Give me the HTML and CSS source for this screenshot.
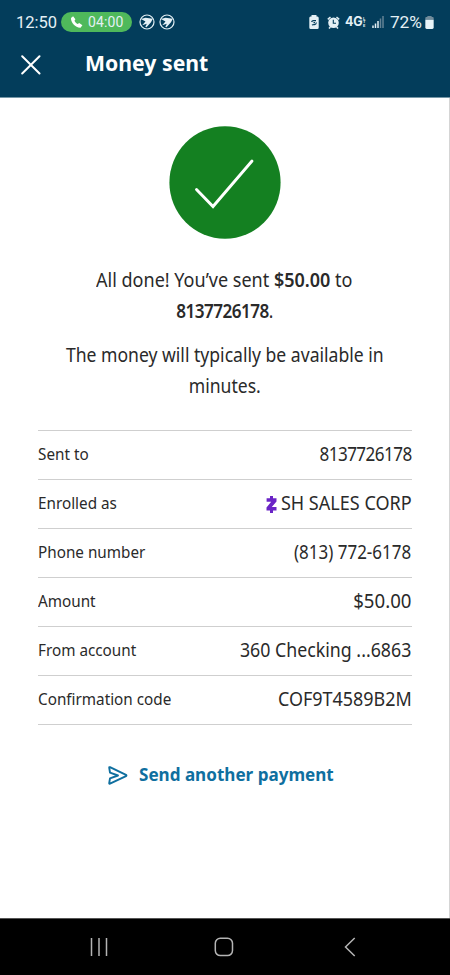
FILE: index.html
```html
<!DOCTYPE html>
<html lang="en">
<head>
<meta charset="utf-8">
<title>Money sent</title>
<link rel="stylesheet" href="styles.css">
</head>
<body>
<header class="header">
  <div class="status">
    <span class="clock">12:50</span>
    <span class="call">
      <svg width="13" height="12" viewBox="0 0 12 12"><path d="M2.600.200.500 2C.1 6.500 5.200 12 10 11.700L11.900 9.300 8.700 6.900 7.200 8.100C5.900 7.500 4.600 6.200 4 4.700L4.900 3.200Z" fill="#fff"/></svg>
      <span class="timer">04:00</span>
    </span>
    <svg class="badge first" width="16" height="16" viewBox="0 0 16 16"><circle cx="8" cy="8" r="7" fill="none" stroke="#e4f0f5" stroke-width="1.200"/><path d="M2 5 6.500 3.800 13.800 4.800 12 8.200 7.500 13.300 6.300 12.800 7.800 9.800 3.200 11.300 6.500 7.500Z" fill="#e4f0f5"/></svg>
    <svg class="badge" width="16" height="16" viewBox="0 0 16 16"><circle cx="8" cy="8" r="7" fill="none" stroke="#e4f0f5" stroke-width="1.200"/><path d="M2 5 6.500 3.800 13.800 4.800 12 8.200 7.500 13.300 6.300 12.800 7.800 9.800 3.200 11.300 6.500 7.500Z" fill="#e4f0f5"/></svg>
    <div class="indicators">
      <svg class="saver" width="10" height="14" viewBox="0 0 10 14"><path d="M2.500 1.500V0h5v1.500H8.500Q9.700 1.500 9.700 3v9.500Q9.700 14 8.300 14H1.700Q.3 14 .3 12.500V3Q.3 1.500 1.500 1.500Z" fill="#e4f0f5"/><path d="M2.600 7Q3 5.500 5 5.700H7M7.400 7.500Q7 9.800 5 9.500L2.900 10M4.500 7.600H6" fill="none" stroke="#033d5b" stroke-width="1.200"/></svg>
      <svg class="alarm" width="13" height="13" viewBox="0 0 13 13"><path d="M.8 3.400 3.500 1M12.200 3.400 9.500 1M2 12.500 3.400 10.900M11 12.500 9.600 10.900" stroke="#e4f0f5" stroke-width="1.500"/><circle cx="6.500" cy="6.800" r="5.300" fill="#e4f0f5"/><path d="M6.300 3.800V7.200H9" fill="none" stroke="#033d5b" stroke-width="1.100"/></svg>
      <span class="network">4G</span><span class="lte">L<br>T<br>E</span>
      <svg class="signal" width="12" height="12" viewBox="0 0 12 12"><path d="M1 9.500V12M3.500 7.500V12M6 5V12" stroke="#e4f0f5" stroke-width="1.500"/><path d="M8.500 2.500V12M11 0V12" stroke="#648395" stroke-width="1.500"/></svg>
      <span class="percent">72%</span>
      <svg width="9" height="13" viewBox="0 0 9 14"><path d="M2.200 0h4.600v1.200H8q1 0 1 1V4H0V2.200q0-1 1-1h1.200Z" fill="#708b9a"/><path d="M0 4h9v8.500Q9 14 7.500 14h-6Q0 14 0 12.500Z" fill="#e9f4f8"/></svg>
    </div>
  </div>
  <div class="bar">
    <svg width="20" height="20" viewBox="0 0 20 20"><path d="M1.200 1.200 18.500 18.500M18.500 1.200 1.200 18.500" stroke="#fff" stroke-width="2" stroke-linecap="round"/></svg>
    <h1>Money sent</h1>
  </div>
</header>
<main>
  <svg class="done" width="112" height="113" viewBox="0 0 112 113"><ellipse cx="56" cy="56.500" rx="55.600" ry="56.300" fill="#148021"/><path d="M27.500 63.500 44 80.500 83 35" fill="none" stroke="#fff" stroke-width="2.900" stroke-linecap="round"/></svg>
  <p class="sent">All done! You’ve sent <b>$50.00</b> to</p>
  <p class="phone"><b>8137726178</b>.</p>
  <p class="note">The money will typically be available in<br>minutes.</p>
  <dl class="details">
    <div><dt>Sent to</dt><dd><span class="recipient">8137726178</span></dd></div>
    <div><dt>Enrolled as</dt><dd><svg width="11" height="17" viewBox="0 0 11 17"><path d="M.6 2.300H10.500V5.600L5.800 11H10.500V14.500H.5V11.500L5.200 5.800H.6Z" fill="#6a24c6"/><path d="M5.500 0V4M5.500 13V17" stroke="#6a24c6" stroke-width="3"/></svg><span class="name">SH SALES CORP</span></dd></div>
    <div><dt>Phone number</dt><dd><span class="number">(813) 772-6178</span></dd></div>
    <div><dt>Amount</dt><dd><span class="amount">$50.00</span></dd></div>
    <div><dt>From account</dt><dd><span class="account">360 Checking ...6863</span></dd></div>
    <div><dt>Confirmation code</dt><dd><span class="code">COF9T4589B2M</span></dd></div>
  </dl>
  <a class="again"><svg width="20" height="19" viewBox="0 0 20 19"><path d="M1.200 1.700Q1.200.9 2 1.200L18 8.800Q18.900 9.500 18 10.100L2 17.700Q1.200 18 1.200 17.200L2 12.300 10 9.500 2 6.700Z" fill="none" stroke="#0f6f9f" stroke-width="1.900" stroke-linejoin="round"/></svg><span>Send another payment</span></a>
</main>
<nav class="nav">
  <svg width="18" height="20" viewBox="0 0 18 20"><path d="M1.500 1V19M9 1V19M16.500 1V19" stroke="#b4b4b4" stroke-width="1.500"/></svg>
  <svg class="home" width="20" height="20" viewBox="0 0 20 20"><rect x="1.300" y="1.200" width="17.200" height="17.400" rx="5" fill="none" stroke="#b4b4b4" stroke-width="1.500"/></svg>
  <svg width="12" height="20" viewBox="0 0 12 20"><path d="M10.700 1 1.500 10 10.700 19" fill="none" stroke="#b4b4b4" stroke-width="1.500"/></svg>
</nav>
</body>
</html>
```
FILE: styles.css
```css
* { box-sizing: border-box; }
body {
  margin: 0;
  height: 975px;
  display: flex;
  flex-direction: column;
  overflow: hidden;
  background: #fff;
  color: #2a2a2a;
  font-family: "Noto Sans", "Open Sans", sans-serif;
}
svg { display: block; flex: none; }
.header {
  height: 98px;
  background: #033d5b;
  border-bottom: 1px solid #7597a7;
  color: #fff;
}
.status {
  display: flex;
  align-items: center;
  height: 44px;
  padding: 0 16px;
  font-family: Roboto, sans-serif;
  color: #e4f0f5;
}
.clock { width: 45px; font-size: 16.5px; }
.call {
  display: flex;
  align-items: center;
  gap: 5px;
  width: 71px;
  height: 20px;
  padding-left: 9px;
  border-radius: 10px;
  background: #4fb95b;
}
.timer { font-size: 14px; letter-spacing: .15px; }
.badge { margin-left: 4px; }
.badge.first { margin-left: 7px; }
.indicators { display: flex; align-items: center; margin-left: auto; }
.saver { margin-right: 8px; }
.alarm { margin-right: 5px; }
.network {
  width: 18px;
  font: 700 12.5px/14px Inter, sans-serif;
  letter-spacing: -.2px;
}
.lte { width: 5px; font: 700 4px/3.5px Roboto, sans-serif; }
.signal { margin: 0 6px 0 4px; }
.percent { margin-right: 3px; font-size: 17.3px; }
.bar { display: flex; align-items: center; gap: 44px; height: 42px; padding-left: 21px; }
h1 {
  margin: -7px 0 0;
  font-size: 22px;
  line-height: 30px;
  font-weight: 700;
  transform: scaleX(.965);
  transform-origin: left;
}
main {
  flex: 1;
  display: flex;
  flex-direction: column;
  align-items: center;
  padding: 28px 0 0;
  border-right: 1px solid #d5d5d5;
}
.done { margin-bottom: 26px; }
p {
  margin: 0;
  white-space: nowrap;
  text-align: center;
  font-size: 19px;
  line-height: 31px;
}
p b { font-weight: 600; }
.sent { transform: scaleX(.948); }
.phone { letter-spacing: -.6px; transform: scaleX(.9); }
.note { margin-top: 13px; transform: scaleX(.925); }
.details {
  width: 374px;
  margin: 28px 0 0;
  border-top: 1px solid #cfcfcf;
}
.details div {
  display: flex;
  align-items: center;
  justify-content: space-between;
  height: 49px;
  padding-bottom: 2px;
  border-bottom: 1px solid #cfcfcf;
}
dt {
  margin-top: -2px;
  font-size: 16.5px;
  transform: scaleX(.925);
  transform-origin: left;
}
dd {
  display: flex;
  align-items: center;
  margin: 0;
  font-size: 19px;
  line-height: 26px;
}
dd svg { margin: 2px -3px 0 0; }
dd span { transform-origin: right; }
.recipient { letter-spacing: -.6px; transform: scaleX(.898); }
.name { transform: scaleX(.95); }
.number { transform: scaleX(.893); }
.amount { transform: scaleX(.98); }
.account { transform: scaleX(.935); }
.code { transform: scaleX(.944); }
.again {
  display: flex;
  align-items: center;
  align-self: flex-start;
  gap: 11px;
  margin: 36px 0 0 108px;
  color: #0f6f9f;
  font-size: 18px;
  line-height: 26px;
  font-weight: 700;
}
.again svg { margin-top: 3px; }
.again span { transform: scaleX(.948); transform-origin: left; }
.nav {
  display: flex;
  align-items: center;
  justify-content: space-between;
  height: 57px;
  padding: 0 94px 0 90px;
  background: #000;
  border-top: 1px solid #555;
}
.home { margin-right: 4px; }
```
